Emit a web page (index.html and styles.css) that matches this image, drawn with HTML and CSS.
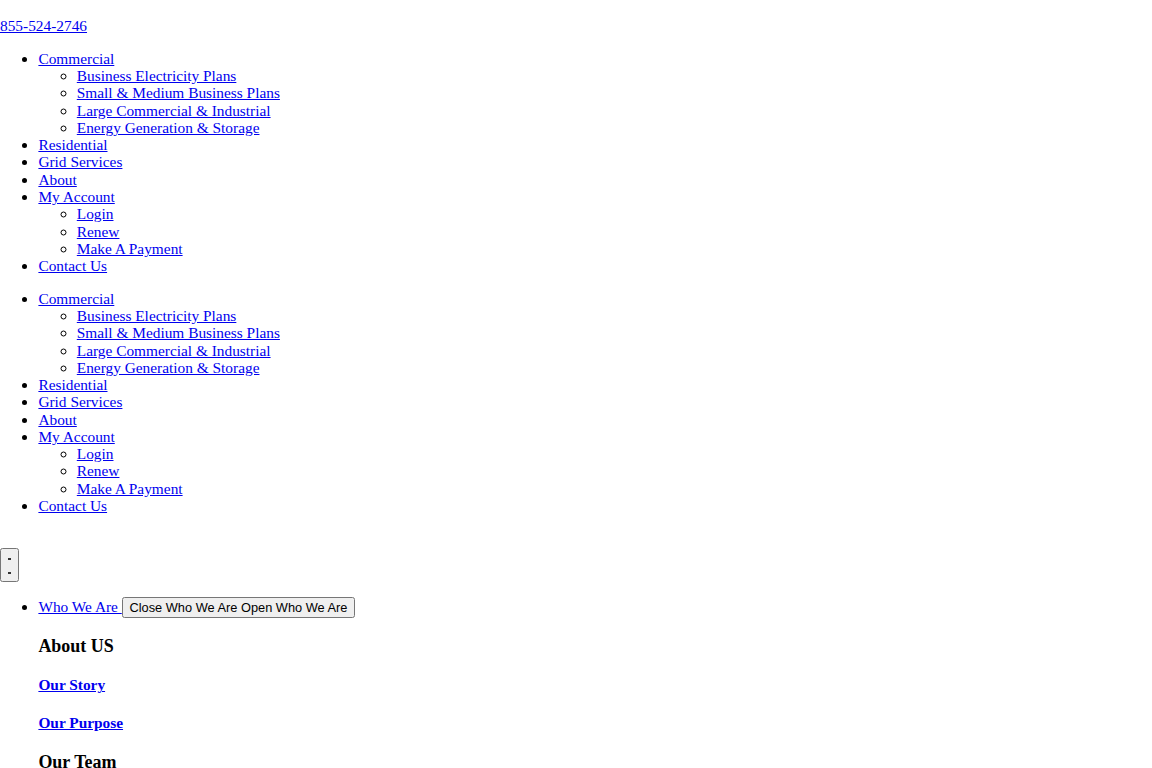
FILE: index.html
```html
<!DOCTYPE html>
<html lang="en">

<head>
    <meta charset="UTF-8">
    <meta name="viewport" content="width=device-width, initial-scale=1.0">
    <title>About Us</title>
    <link rel="stylesheet" href="styles.css">
</head>

<body>
    <header class="site-header">
        <div class="top-bar">&nbsp;</div>
        <div class="phone"><a href="tel:8555242746">855-524-2746</a></div>

        <nav class="main-nav">
            <ul>
                <li><a href="#">Commercial</a>
                    <ul>
                        <li><a href="#">Business Electricity Plans</a></li>
                        <li><a href="#">Small &amp; Medium Business Plans</a></li>
                        <li><a href="#">Large Commercial &amp; Industrial</a></li>
                        <li><a href="#">Energy Generation &amp; Storage</a></li>
                    </ul>
                </li>
                <li><a href="#">Residential</a></li>
                <li><a href="#">Grid Services</a></li>
                <li><a href="#">About</a></li>
                <li><a href="#">My Account</a>
                    <ul>
                        <li><a href="#">Login</a></li>
                        <li><a href="#">Renew</a></li>
                        <li><a href="#">Make A Payment</a></li>
                    </ul>
                </li>
                <li><a href="#">Contact Us</a></li>
            </ul>
        </nav>

        <nav class="mobile-nav">
            <ul>
                <li><a href="#">Commercial</a>
                    <ul>
                        <li><a href="#">Business Electricity Plans</a></li>
                        <li><a href="#">Small &amp; Medium Business Plans</a></li>
                        <li><a href="#">Large Commercial &amp; Industrial</a></li>
                        <li><a href="#">Energy Generation &amp; Storage</a></li>
                    </ul>
                </li>
                <li><a href="#">Residential</a></li>
                <li><a href="#">Grid Services</a></li>
                <li><a href="#">About</a></li>
                <li><a href="#">My Account</a>
                    <ul>
                        <li><a href="#">Login</a></li>
                        <li><a href="#">Renew</a></li>
                        <li><a href="#">Make A Payment</a></li>
                    </ul>
                </li>
                <li><a href="#">Contact Us</a></li>
            </ul>
        </nav>

        <div class="toggle-row">
            <button class="menu-toggle"><span class="bar"></span><span class="bar"></span></button>
        </div>
    </header>

    <ul class="section-nav">
        <li><a href="#">Who We Are </a><button class="section-toggle"><span>Close Who We Are</span> <span>Open Who We Are</span></button>
            <div class="section-menu">
                <h3>About US</h3>
                <h4><a href="#">Our Story</a></h4>
                <h4><a href="#">Our Purpose</a></h4>
                <h3>Our Team</h3>
            </div>
        </li>
    </ul>
</body>

</html>
```

FILE: styles.css
```css
body {
    margin: 0;
    font-family: "Liberation Serif", "Times New Roman", serif;
    font-size: 15.36px;
    line-height: 1.125;
}

ul {
    padding-left: 2.5em;
}

.toggle-row {
    padding-top: 18px;
}

.menu-toggle {
    display: block;
    width: 19px;
    height: 34px;
    padding: 8px 0 0;
    box-sizing: border-box;
}

.menu-toggle .bar {
    display: block;
    width: 3px;
    height: 2px;
    margin: 0 auto 12px;
    background-color: #333;
}

.section-toggle {
    font-family: "Liberation Sans", Arial, sans-serif;
    font-size: 12.8px;
    padding: 1px 5.76px;
}
```
